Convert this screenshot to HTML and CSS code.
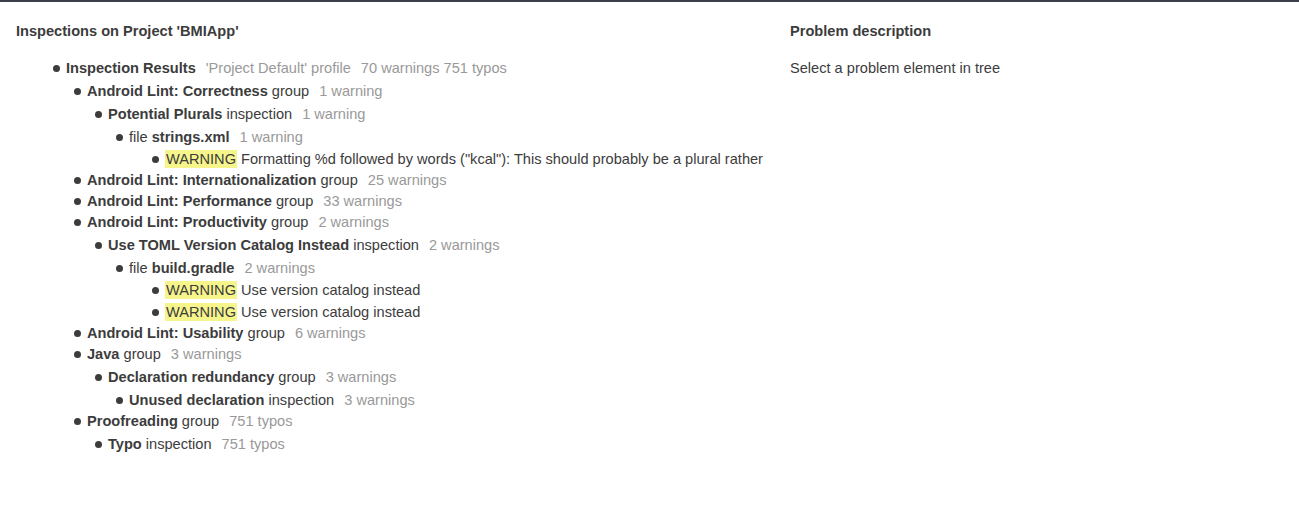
FILE: index.html
```html
<!DOCTYPE html>
<html lang="en">
<head>
<meta charset="utf-8">
<title>Inspections on Project 'BMIApp'</title>
<link rel="stylesheet" href="styles.css">
</head>
<body>
<div class="page">
  <section class="panel tree-panel">
    <h2 class="panel-title">Inspections on Project 'BMIApp'</h2>
    <ul class="tree root">
      <li>
        <div class="row"><b>Inspection Results</b><span class="count">'Project Default' profile</span><span class="count">70 warnings 751 typos</span></div>
        <ul class="tree">
          <li>
            <div class="row"><b>Android Lint: Correctness</b> group<span class="count">1 warning</span></div>
            <ul class="tree">
              <li>
                <div class="row"><b>Potential Plurals</b> inspection<span class="count">1 warning</span></div>
                <ul class="tree">
                  <li>
                    <div class="row">file <b>strings.xml</b><span class="count">1 warning</span></div>
                    <ul class="tree problems">
                      <li><div class="row"><span class="sev">WARNING</span> Formatting %d followed by words ("kcal"): This should probably be a plural rather</div></li>
                    </ul>
                  </li>
                </ul>
              </li>
            </ul>
          </li>
          <li><div class="row"><b>Android Lint: Internationalization</b> group<span class="count">25 warnings</span></div></li>
          <li><div class="row"><b>Android Lint: Performance</b> group<span class="count">33 warnings</span></div></li>
          <li>
            <div class="row"><b>Android Lint: Productivity</b> group<span class="count">2 warnings</span></div>
            <ul class="tree">
              <li>
                <div class="row"><b>Use TOML Version Catalog Instead</b> inspection<span class="count">2 warnings</span></div>
                <ul class="tree">
                  <li>
                    <div class="row">file <b>build.gradle</b><span class="count">2 warnings</span></div>
                    <ul class="tree problems">
                      <li><div class="row"><span class="sev">WARNING</span> Use version catalog instead</div></li>
                      <li><div class="row"><span class="sev">WARNING</span> Use version catalog instead</div></li>
                    </ul>
                  </li>
                </ul>
              </li>
            </ul>
          </li>
          <li><div class="row"><b>Android Lint: Usability</b> group<span class="count">6 warnings</span></div></li>
          <li>
            <div class="row"><b>Java</b> group<span class="count">3 warnings</span></div>
            <ul class="tree">
              <li>
                <div class="row"><b>Declaration redundancy</b> group<span class="count">3 warnings</span></div>
                <ul class="tree">
                  <li><div class="row"><b>Unused declaration</b> inspection<span class="count">3 warnings</span></div></li>
                </ul>
              </li>
            </ul>
          </li>
          <li>
            <div class="row"><b>Proofreading</b> group<span class="count">751 typos</span></div>
            <ul class="tree">
              <li><div class="row"><b>Typo</b> inspection<span class="count">751 typos</span></div></li>
            </ul>
          </li>
        </ul>
      </li>
    </ul>
  </section>
  <section class="panel desc-panel">
    <h2 class="panel-title">Problem description</h2>
    <p class="desc-text">Select a problem element in tree</p>
  </section>
</div>
</body>
</html>
```

FILE: styles.css
```css
html, body {
  margin: 0;
  padding: 0;
  background: #ffffff;
}

body {
  font-family: "Liberation Sans", Arial, sans-serif;
  font-size: 14.6px;
  color: #3c3c3c;
}

.page {
  border-top: 2px solid #3d3f4b;
  display: grid;
  grid-template-columns: 774px 1fr;
  padding: 19px 0 0 16px;
  min-height: 490px;
  box-sizing: border-box;
}

.panel-title {
  margin: 0;
  font-size: 14.6px;
  font-weight: bold;
  line-height: 21px;
  color: #3c3c3c;
}

.tree {
  list-style: none;
  margin: 0;
  padding: 0 0 0 21px;
}

.tree.root {
  margin-top: 16px;
  padding-left: 37px;
}

.tree .tree {
  margin-top: 2px;
}

.tree.problems {
  margin-top: 1px;
  padding-left: 36px;
}

.tree.problems li + li {
  margin-top: 1px;
}

.row {
  line-height: 21px;
  white-space: nowrap;
}

.row::before {
  content: "";
  display: inline-block;
  width: 7px;
  height: 7px;
  border-radius: 50%;
  background: #3c3c3c;
  margin-right: 6px;
  vertical-align: 1px;
}

.row b {
  font-weight: bold;
}

.count {
  color: #999999;
  margin-left: 10px;
}

.sev {
  background: #f6f58c;
  padding: 1px 1px;
}

.desc-text {
  margin: 16px 0 0 0;
  line-height: 21px;
}
```
